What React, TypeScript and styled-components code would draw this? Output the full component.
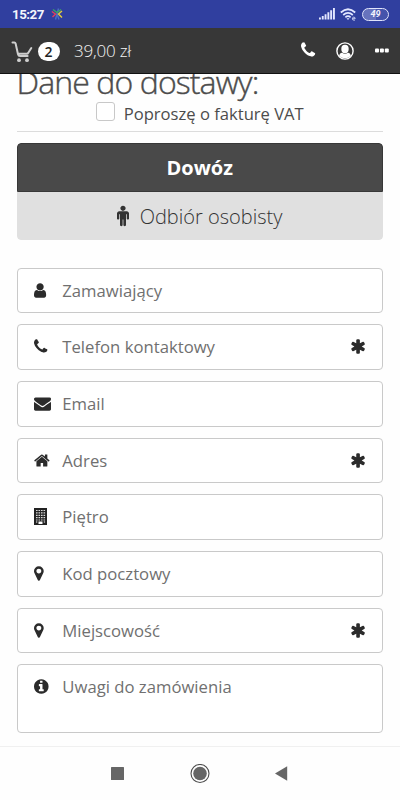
import React from "react";
import styled, { createGlobalStyle } from "styled-components";

const GlobalStyle = createGlobalStyle`
  * { box-sizing: border-box; }
  body { margin: 0; background: #fefefe; font-family: "Open Sans", "Noto Sans", sans-serif; }
`;

const Screen = styled.div`
  width: 400px;
  height: 800px;
  display: flex;
  flex-direction: column;
  overflow: hidden;
  background: #fefefe;
`;

const StatusBar = styled.div`
  flex: none;
  height: 28px;
  padding: 0 11px 0 12px;
  display: flex;
  align-items: center;
  background: #303f9f;
  color: #f4f5fc;
`;

const Clock = styled.span`
  font: 700 13.3px/28px Roboto, sans-serif;
  width: 32px;
  margin-top: 1px;
  letter-spacing: -0.5px;
  white-space: nowrap;
`;

const StatusMark = styled.span`
  display: flex;
  margin-left: 6.5px;
`;

const StatusIcons = styled.div`
  margin-left: auto;
  display: flex;
  align-items: center;
  gap: 5px;
`;

const Battery = styled.span`
  flex: none;
  width: 27px;
  height: 13px;
  border: 1px solid #e0e4fb;
  border-radius: 7px;
  background: linear-gradient(90deg, #6773bd 52%, #4553ab 52%);
  font: italic 700 9px/11px Roboto, sans-serif;
  text-align: center;
`;

const Header = styled.header`
  flex: none;
  height: 46px;
  padding: 0 11px;
  display: flex;
  align-items: center;
  background: #373737;
  border-bottom: 1px solid #111;
  color: #fff;
`;

const CartSlot = styled.span`
  display: flex;
  margin-top: 2px;
`;

const Count = styled.span`
  width: 22px;
  height: 19px;
  margin-left: 4.5px;
  margin-top: 2px;
  border-radius: 10px;
  background: #fff;
  color: #222;
  font-size: 14px;
  font-weight: 600;
  line-height: 19px;
  text-align: center;
`;

const Total = styled.span`
  margin-left: 14.5px;
  font-size: 17px;
  font-weight: 300;
  letter-spacing: -0.2px;
  color: #f4f4f4;
`;

const HeaderActions = styled.div`
  margin-left: auto;
  display: flex;
  align-items: center;
`;

const PhoneAction = styled.span`
  display: flex;
  margin-right: 21px;
  margin-top: -1px;
`;

const MenuAction = styled.span`
  display: flex;
  margin-left: 21px;
`;

const Content = styled.main`
  flex: 1;
  min-height: 0;
  padding: 0 17px 0 16.5px;
  overflow: hidden;
`;

const Title = styled.h1`
  margin: -7px 0 0;
  height: 37px;
  font-size: 32px;
  line-height: 30px;
  font-weight: 300;
  letter-spacing: -0.9px;
  -webkit-text-stroke: 0.4px #4c4c4c;
  color: #4c4c4c;
  white-space: nowrap;
`;

const InvoiceRow = styled.label`
  height: 28px;
  display: flex;
  justify-content: center;
  border-bottom: 1px solid #dcdcdc;
  font-size: 16.6px;
  line-height: 20px;
  color: #4c4c4c;
`;

const CheckBox = styled.span`
  width: 19px;
  height: 19px;
  margin: -2px 9px 0 0;
  border: 1px solid #c8c8c8;
  border-radius: 3px;
  background: #fff;
`;

const Delivery = styled.div`
  margin-top: 11px;
  height: 97px;
  border-radius: 4px;
  overflow: hidden;
`;

const DeliveryOption = styled.div<{ $active?: boolean }>`
  height: ${(p) => (p.$active ? 49 : 48)}px;
  display: flex;
  align-items: center;
  justify-content: center;
  gap: 10.5px;
  font-size: 20px;
  font-weight: ${(p) => (p.$active ? 700 : 300)};
  color: ${(p) => (p.$active ? "#fff" : "#333")};
  background: ${(p) => (p.$active ? "#494949" : "#e0e0e0")};
  border: ${(p) => (p.$active ? "1px solid #383838" : "0")};
  border-radius: ${(p) => (p.$active ? "4px 4px 0 0" : "0 0 4px 4px")};
`;

const Fields = styled.div`
  margin-top: 27.6px;
  display: flex;
  flex-direction: column;
  gap: 11px;
`;

const FieldBox = styled.div<{ $tall?: boolean }>`
  flex: none;
  height: ${(p) => (p.$tall ? 69 : 45.67)}px;
  padding: 13px 17px 0 16.5px;
  display: flex;
  align-items: flex-start;
  border: 1px solid #c9c9c9;
  border-radius: 4px;
  background: #fff;
  color: #2b2b2b;
`;

const IconSlot = styled.span`
  width: 28.3px;
  display: flex;
`;

const FieldText = styled.span`
  flex: 1;
  margin-top: -1px;
  font-size: 16.7px;
  line-height: 20px;
  color: #707070;
`;

const NavBar = styled.nav`
  flex: none;
  height: 54px;
  border-top: 1px solid #f0f0f0;
  display: grid;
  grid-template-columns: 20px 20px 20px;
  gap: 62px;
  justify-content: center;
  align-items: center;
  justify-items: center;
  padding-right: 1px;
`;

const glyphs = {
  user: {
    x: 256,
    w: 1280,
    d: "M1536 1399q0 109-62.5 187t-150.5 78h-854q-88 0-150.5-78t-62.5-187q0-85 8.5-160.5t31.5-152 58.5-131 94-89 134.5-34.5q131 128 313 128t313-128q76 0 134.5 34.5t94 89 58.5 131 31.5 152 8.5 160.5zm-256-887q0 159-112.5 271.5t-271.5 112.5-271.5-112.5-112.5-271.5 112.5-271.5 271.5-112.5 271.5 112.5 112.5 271.5z",
  },
  phone: {
    x: 192,
    w: 1408,
    d: "M1600 1240q0 27-10 70.5t-21 68.5q-21 50-122 106-94 51-186 51-27 0-53-3.5t-57.5-12.5-47-14.5-55.5-20.5-49-18q-98-35-175-83-127-79-264-216t-216-264q-48-77-83-175-3-9-18-49t-20.5-55.5-14.5-47-12.5-57.5-3.5-53q0-92 51-186 56-101 106-122 25-11 68.5-21t70.5-10q14 0 21 3 18 6 53 76 11 19 30 54t35 63.5 31 53.5q3 4 17.5 25t21.5 35.5 7 28.5q0 20-28.5 50t-62 55-62 53-28.5 46q0 9 5 22.5t8.5 20.5 14 24 11.5 19q76 137 174 235t235 174q2 1 19 11.5t24 14 20.5 8.5 22.5 5q18 0 46-28.5t53-62 55-62 50-28.5q14 0 28.5 7t35.5 21.5 25 17.5q25 15 53.5 31t63.5 35 54 30q70 35 76 53 3 7 3 21z",
  },
  envelope: {
    x: 0,
    w: 1792,
    d: "M1792 710v794q0 66-47 113t-113 47h-1472q-66 0-113-47t-47-113v-794q44 49 101 87 362 246 497 345 57 42 92.5 65.5t94.5 48 110 24.5h2q51 0 110-24.5t94.5-48 92.5-65.5q170-123 498-345 57-39 100-87zm0-294q0 79-49 151t-122 123q-376 261-468 325-10 7-42.5 31t-54 38.5-52 32.5-57.5 27-50 9h-2q-23 0-50-9t-57.5-27-52-32.5-54-38.5-42.5-31q-91-64-262-182.5t-205-142.5q-62-42-117-115.5t-55-136.5q0-78 41.5-130t118.5-52h1472q65 0 112.5 47t47.5 113z",
  },
  home: {
    x: 64,
    w: 1664,
    d: "M1472 992v480q0 26-19 45t-45 19h-384v-384h-256v384h-384q-26 0-45-19t-19-45v-480q0-1 .5-3t.5-3l575-474 575 474q1 2 1 6zm223-69l-62 74q-8 9-21 11h-3q-13 0-21-7l-692-577-692 577q-12 8-24 7-13-2-21-11l-62-74q-8-10-7-23.5t11-21.5l719-599q32-26 76-26t76 26l244 204v-195q0-14 9-23t23-9h192q14 0 23 9t9 23v408l219 182q10 8 11 21.5t-7 23.5z",
  },
  marker: {
    x: 384,
    w: 1024,
    d: "M1152 640q0-106-75-181t-181-75-181 75-75 181 75 181 181 75 181-75 75-181zm256 0q0 109-33 179l-364 774q-16 33-47.5 52t-67.5 19-67.5-19-46.5-52l-365-774q-33-70-33-179 0-212 150-362t362-150 362 150 150 362z",
  },
  info: {
    x: 128,
    w: 1536,
    d: "M1152 1376v-160q0-14-9-23t-23-9h-96v-512q0-14-9-23t-23-9h-320q-14 0-23 9t-9 23v160q0 14 9 23t23 9h96v320h-96q-14 0-23 9t-9 23v160q0 14 9 23t23 9h448q14 0 23-9t9-23zm-128-896v-160q0-14-9-23t-23-9h-192q-14 0-23 9t-9 23v160q0 14 9 23t23 9h192q14 0 23-9t9-23zm640 416q0 209-103 385.5t-279.5 279.5-385.5 103-385.5-103-279.5-279.5-103-385.5 103-385.5 279.5-279.5 385.5-103 385.5 103 279.5 279.5 103 385.5z",
  },
  asterisk: {
    x: 192,
    w: 1408,
    d: "M1482 1050q46 26 59.5 77.5t-12.5 97.5l-64 110q-26 46-77.5 59.5t-97.5-12.5l-266-153v307q0 52-38 90t-90 38h-128q-52 0-90-38t-38-90v-307l-266 153q-46 26-97.5 12.5t-77.5-59.5l-64-110q-26-46-12.5-97.5t59.5-77.5l266-154-266-154q-46-26-59.5-77.5t12.5-97.5l64-110q26-46 77.5-59.5t97.5 12.5l266 153v-307q0-52 38-90t90-38h128q52 0 90 38t38 90v307l266-153q46-26 97.5-12.5t77.5 59.5l64 110q26 46 12.5 97.5t-59.5 77.5l-266 154z",
  },
  male: {
    x: 384,
    w: 1024,
    d: "M1408 640v416q0 40-28 68t-68 28-68-28-28-68v-352h-64v912q0 46-33 79t-79 33-79-33-33-79v-464h-64v464q0 46-33 79t-79 33-79-33-33-79v-912h-64v352q0 40-28 68t-68 28-68-28-28-68v-416q0-80 56-136t136-56h640q80 0 136 56t56 136zm-288-448q0 93-65.5 158.5t-158.5 65.5-158.5-65.5-65.5-158.5 65.5-158.5 158.5-65.5 158.5 65.5 65.5 158.5z",
  },
};

type GlyphName = keyof typeof glyphs;

function Glyph({ name, size = 17 }: { name: GlyphName; size?: number }) {
  const g = glyphs[name];
  return (
    <svg width={(g.w / 1792) * size} height={size} viewBox={`${g.x} 0 ${g.w} 1792`} fill="currentColor" overflow="visible">
      <path d={g.d} />
    </svg>
  );
}

function Building() {
  return (
    <svg width="13" height="17" viewBox="0 0 13 17">
      <path fill="#222" d="M0 0h13v17H0z" />
      <path
        stroke="#d8d8d8"
        strokeWidth="1.2"
        strokeDasharray="1.6 .9"
        d="M2 2.5h9.4M2 4.9h9.4M2 7.3h9.4M2 9.7h9.4M2 12h9.4"
      />
      <path fill="#fff" d="M4.5 13.5h4V16h-4zM2 13.5h1.3v1H2zM9.8 13.5h1.3v1H9.8z" />
    </svg>
  );
}

function StarMark() {
  return (
    <svg width="12" height="12" viewBox="0 0 12 12" fill="none" strokeWidth="1.4">
      <path stroke="#4b6fc4" d="M6 6 7.5.5M6 6 4.5 11.5M6 6l2 5.5" />
      <path stroke="#3aa563" d="M2 1.5 6 4.5 10 1.5" />
      <path stroke="#e0405e" d="M.8 3.5 4.5 6 1.5 9" />
      <path stroke="#e8d038" d="M11 3 7.5 6l3.5 3.5" />
    </svg>
  );
}

function Signal() {
  return (
    <svg width="16" height="12" viewBox="0 0 16 12" fill="#e3e7ff">
      <path d="M0 9.5h1.9V11.5H0zM2.8 8h1.9v3.5H2.8zM5.6 6.2h1.9v5.3H5.6zM8.4 4.3h1.9v7.2H8.4zM11.2 2.3h1.9v9.2h-1.9zM14 0h1.9v11.5H14z" />
    </svg>
  );
}

function Wifi() {
  return (
    <svg width="17" height="13" viewBox="0 0 17 13" fill="none" stroke="#e3e7ff" strokeWidth="1.7">
      <path d="M.8 4.5Q8-2 15.2 4.5M3.2 7Q8 2.8 12.8 7M5.4 9.3Q8 7 10.6 9.3" />
      <path d="M6.5 10.2h3L8 12z" fill="#e3e7ff" stroke="none" />
      <path d="M12.5 10.7h2.7q0-1.6-1.4-1.6-1.4.1-1.4 1.6 0 1.5 1.5 1.5h1" strokeWidth=".8" />
    </svg>
  );
}

function Cart() {
  return (
    <svg width="22" height="22" viewBox="0 0 22 22" fill="none" stroke="#cfcfcf" strokeWidth="2" strokeLinecap="round" strokeLinejoin="round">
      <path d="M1.5 1.5h1.8q1 0 1.3 1L7 13.2q.4 1.8 2 1.8h7.6M7 12.7h8.7q1.1 0 1.6-1L20.3 7" />
      <circle cx="8" cy="19.2" r="1.9" fill="#cfcfcf" stroke="none" />
      <circle cx="16" cy="19.2" r="1.9" fill="#cfcfcf" stroke="none" />
    </svg>
  );
}

function Account() {
  return (
    <svg width="18" height="18" viewBox="0 0 18 18">
      <circle cx="9" cy="9" r="8.1" fill="none" stroke="#fff" strokeWidth="1.4" />
      <ellipse cx="9" cy="7" rx="3.7" ry="4.2" fill="#fff" />
      <path fill="#fff" d="M3.2 14q.2-3 2.9-3.2 2.9 2 5.8 0 2.7.2 2.9 3.2Q12.5 16.3 9 16.3T3.2 14z" />
    </svg>
  );
}

function Dots() {
  return (
    <svg width="14" height="5" viewBox="0 0 14 5" fill="#fff">
      <rect x="0" y=".5" width="4" height="4" rx="1" />
      <rect x="4.9" y=".5" width="4" height="4" rx="1" />
      <rect x="9.8" y=".5" width="4" height="4" rx="1" />
    </svg>
  );
}

const fields: { icon: GlyphName | "building"; label: string; required?: boolean; tall?: boolean }[] = [
  { icon: "user", label: "Zamawiający" },
  { icon: "phone", label: "Telefon kontaktowy", required: true },
  { icon: "envelope", label: "Email" },
  { icon: "home", label: "Adres", required: true },
  { icon: "building", label: "Piętro" },
  { icon: "marker", label: "Kod pocztowy" },
  { icon: "marker", label: "Miejscowość", required: true },
  { icon: "info", label: "Uwagi do zamówienia", tall: true },
];

export default function App() {
  return (
    <Screen>
      <GlobalStyle />
      <StatusBar>
        <Clock>15:27</Clock>
        <StatusMark>
          <StarMark />
        </StatusMark>
        <StatusIcons>
          <Signal />
          <Wifi />
          <Battery>49</Battery>
        </StatusIcons>
      </StatusBar>
      <Header>
        <CartSlot>
          <Cart />
        </CartSlot>
        <Count>2</Count>
        <Total>39,00 zł</Total>
        <HeaderActions>
          <PhoneAction>
            <Glyph name="phone" size={18} />
          </PhoneAction>
          <Account />
          <MenuAction>
            <Dots />
          </MenuAction>
        </HeaderActions>
      </Header>
      <Content>
        <Title>Dane do dostawy:</Title>
        <InvoiceRow>
          <CheckBox />
          Poproszę o fakturę VAT
        </InvoiceRow>
        <Delivery>
          <DeliveryOption $active>Dowóz</DeliveryOption>
          <DeliveryOption>
            <Glyph name="male" size={21} />
            Odbiór osobisty
          </DeliveryOption>
        </Delivery>
        <Fields>
          {fields.map((f) => (
            <FieldBox key={f.label} $tall={f.tall}>
              <IconSlot>{f.icon === "building" ? <Building /> : <Glyph name={f.icon} />}</IconSlot>
              <FieldText>{f.label}</FieldText>
              {f.required && <Glyph name="asterisk" size={17} />}
            </FieldBox>
          ))}
        </Fields>
      </Content>
      <NavBar>
        <svg width="13" height="13" viewBox="0 0 13 13">
          <rect width="13" height="13" rx=".5" fill="#666" />
        </svg>
        <svg width="20" height="20" viewBox="0 0 20 20">
          <circle cx="10" cy="9.5" r="9" fill="#fff" stroke="#4c4c4c" strokeWidth="1.1" />
          <circle cx="10" cy="9.5" r="6.8" fill="#666" />
        </svg>
        <svg width="13" height="15" viewBox="0 0 13 15">
          <path d="M12.2 .3v14.4L-.1 7.5z" fill="#666" />
        </svg>
      </NavBar>
    </Screen>
  );
}
